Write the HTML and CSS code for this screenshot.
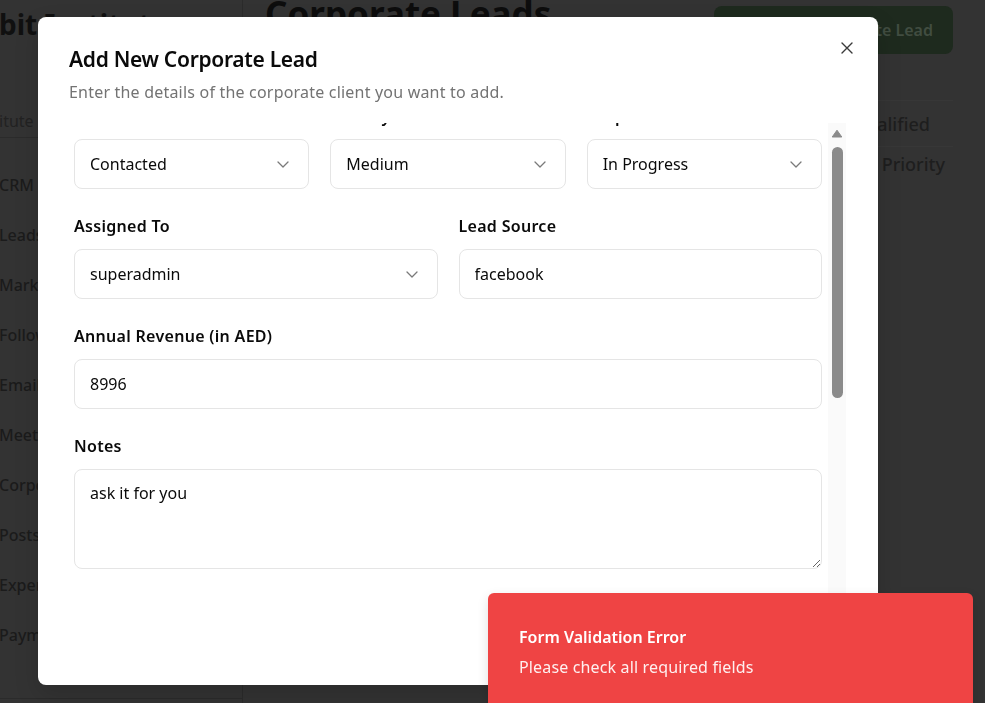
FILE: index.html
```html
<!DOCTYPE html>
<html lang="en">
<head>
<meta charset="utf-8">
<title>Corporate Leads</title>
<link rel="stylesheet" href="styles.css">
</head>
<body>
<div class="app">
  <aside class="sidebar">
    <div class="brand">
      <div class="brand-name">bit Institute</div>
      <div class="brand-sub">itute</div>
    </div>
    <nav class="nav">
      <a class="nav-item">CRM</a>
      <a class="nav-item">Leads</a>
      <a class="nav-item">Marketing</a>
      <a class="nav-item">Follow-ups</a>
      <a class="nav-item">Emails</a>
      <a class="nav-item">Meetings</a>
      <a class="nav-item">Corporate</a>
      <a class="nav-item">Posts</a>
      <a class="nav-item">Expenses</a>
      <a class="nav-item">Payments</a>
    </nav>
    <div class="sidebar-foot"></div>
  </aside>
  <main class="main">
    <header class="page-head">
      <h1 class="page-title">Corporate Leads</h1>
      <button class="primary-btn" type="button">
        <svg width="16" height="16" viewBox="0 0 24 24" fill="none" stroke="currentColor" stroke-width="2" stroke-linecap="round"><path d="M12 5v14M5 12h14"/></svg>
        <span>Add Corporate Lead</span>
      </button>
    </header>
    <section class="summary">
      <div class="summary-row summary-row-a">Qualified</div>
      <div class="summary-row summary-row-b">High Priority</div>
    </section>
  </main>
</div>

<div class="modal" role="dialog" aria-labelledby="dlg-title">
  <button class="close-btn" type="button" aria-label="Close">
    <svg width="12" height="12" viewBox="0 0 12 12" fill="none" stroke="currentColor" stroke-width="1.4" stroke-linecap="round"><path d="M1 1L11 11M11 1L1 11"/></svg>
  </button>
  <div class="modal-head">
    <h2 id="dlg-title" class="modal-title">Add New Corporate Lead</h2>
    <p class="modal-desc">Enter the details of the corporate client you want to add.</p>
  </div>
  <div class="modal-body">
    <div class="scroll-area">
      <form class="form">
        <div class="grid-3">
          <div class="field">
            <label class="label">Status</label>
            <button class="select" type="button"><span>Contacted</span><svg class="chev" width="12" height="7" viewBox="0 0 12 7" fill="none" stroke="currentColor" stroke-width="1.3" stroke-linecap="round" stroke-linejoin="round"><path d="M1 1L6 6L11 1"/></svg></button>
          </div>
          <div class="field">
            <label class="label">Priority</label>
            <button class="select" type="button"><span>Medium</span><svg class="chev" width="12" height="7" viewBox="0 0 12 7" fill="none" stroke="currentColor" stroke-width="1.3" stroke-linecap="round" stroke-linejoin="round"><path d="M1 1L6 6L11 1"/></svg></button>
          </div>
          <div class="field">
            <label class="label">Response Status</label>
            <button class="select" type="button"><span>In Progress</span><svg class="chev" width="12" height="7" viewBox="0 0 12 7" fill="none" stroke="currentColor" stroke-width="1.3" stroke-linecap="round" stroke-linejoin="round"><path d="M1 1L6 6L11 1"/></svg></button>
          </div>
        </div>
        <div class="grid-2">
          <div class="field">
            <label class="label">Assigned To</label>
            <button class="select" type="button"><span>superadmin</span><svg class="chev" width="12" height="7" viewBox="0 0 12 7" fill="none" stroke="currentColor" stroke-width="1.3" stroke-linecap="round" stroke-linejoin="round"><path d="M1 1L6 6L11 1"/></svg></button>
          </div>
          <div class="field">
            <label class="label">Lead Source</label>
            <input class="input" type="text" value="facebook">
          </div>
        </div>
        <div class="field">
          <label class="label">Annual Revenue (in AED)</label>
          <input class="input" type="text" value="8996">
        </div>
        <div class="field">
          <label class="label">Notes</label>
          <textarea class="textarea">ask it for you</textarea>
        </div>
      </form>
    </div>
    <div class="scrollbar" aria-hidden="true">
      <span class="sb-button">
        <svg width="12" height="9" viewBox="0 0 12 9"><path d="M6 1.2L10.8 8H1.2Z" fill="#8b8b8b" stroke="#8b8b8b" stroke-width="1" stroke-linejoin="round"/></svg>
      </span>
      <span class="sb-thumb"></span>
    </div>
  </div>
  <div class="modal-foot"></div>
</div>

<div class="toast" role="status">
  <div class="toast-title">Form Validation Error</div>
  <div class="toast-desc">Please check all required fields</div>
</div>
</body>
</html>
```

FILE: styles.css
```css
* {
  box-sizing: border-box;
}

html, body {
  margin: 0;
  padding: 0;
}

body {
  width: 985px;
  height: 703px;
  overflow: hidden;
  background: #333333;
  font-family: "Noto Sans", "Open Sans", sans-serif;
  color: #0a0a0a;
}

button, input, textarea {
  font-family: inherit;
}

/* ---------- background page (dimmed) ---------- */
.app {
  display: flex;
  height: 703px;
}

.sidebar {
  width: 243px;
  flex: none;
  display: flex;
  flex-direction: column;
  border-right: 1px solid #2b2b2b;
}

.brand {
  height: 138px;
  border-bottom: 1px solid #2b2b2b;
  padding-top: 4px;
}

.brand-name {
  font-size: 28px;
  font-weight: 700;
  line-height: 40px;
  color: #101010;
  white-space: nowrap;
  margin-left: -1px;
}

.brand-sub {
  margin-top: 65px;
  font-size: 16px;
  line-height: 24px;
  color: #222222;
  white-space: nowrap;
  margin-left: -1px;
}

.nav {
  display: flex;
  flex-direction: column;
  padding-top: 22px;
  flex: 1;
}

.nav-item {
  height: 50px;
  display: flex;
  align-items: center;
  font-size: 16px;
  font-weight: 500;
  color: #1b1b1b;
  white-space: nowrap;
  margin-left: -1px;
}

.sidebar-foot {
  height: 5px;
  border-top: 1px solid #2b2b2b;
}

.main {
  flex: 1;
  padding: 0 32px 0 22px;
}

.page-head {
  display: flex;
  justify-content: space-between;
  align-items: flex-start;
}

.page-title {
  margin: -6px 0 0;
  font-size: 35px;
  line-height: 40px;
  font-weight: 700;
  color: #0d0d0d;
  white-space: nowrap;
}

.primary-btn {
  margin-top: 6px;
  width: 239px;
  height: 48px;
  border: 0;
  border-radius: 8px;
  background: #1e2a1e;
  color: #414d41;
  display: flex;
  align-items: center;
  justify-content: flex-end;
  gap: 8px;
  font-size: 16px;
  font-weight: 600;
  padding: 0 20px;
}

.summary {
  margin: 46px 0 0 auto;
  width: 300px;
  border-top: 1px solid #373737;
}

.summary-row {
  height: 45px;
  display: flex;
  align-items: center;
  justify-content: flex-end;
  font-size: 18px;
  font-weight: 500;
  color: #1e1e1e;
}

.summary-row-a {
  padding-right: 23px;
  border-bottom: 1px solid #373737;
  margin-top: 1px;
}

.summary-row-b {
  padding-right: 8px;
  margin-top: -6px;
}

/* ---------- dialog ---------- */
.modal {
  position: fixed;
  left: 38px;
  top: 17px;
  width: 840px;
  height: 668px;
  background: #ffffff;
  border-radius: 8px;
  padding: 28px 32px 24px;
  display: flex;
  flex-direction: column;
  box-shadow: 0 10px 25px rgba(0, 0, 0, 0.15);
}

.close-btn {
  position: absolute;
  top: 23px;
  left: 801px;
  width: 16px;
  height: 16px;
  padding: 0;
  border: 0;
  background: transparent;
  color: #3a3a3a;
  display: flex;
  align-items: center;
  justify-content: center;
}

.modal-head {
  flex: none;
}

.modal-title {
  margin: 0;
  font-size: 21px;
  line-height: 28px;
  font-weight: 600;
  color: #0a0a0a;
  letter-spacing: -0.3px;
  margin-left: -1px;
}

.modal-desc {
  margin: 7px 0 0;
  font-size: 16px;
  line-height: 24px;
  color: #737373;
  letter-spacing: 0.2px;
  margin-left: -1px;
}

.modal-body {
  flex: 1;
  min-height: 0;
  margin-top: 19px;
  display: flex;
}

.scroll-area {
  flex: 1;
  min-width: 0;
  overflow: hidden;
  padding: 0 6px 0 4px;
}

.form {
  margin-top: -19px;
  display: flex;
  flex-direction: column;
  gap: 25px;
}

.grid-3 {
  display: grid;
  grid-template-columns: repeat(3, 1fr);
  gap: 21px;
}

.grid-2 {
  display: grid;
  grid-template-columns: repeat(2, 1fr);
  gap: 21px;
}

.field {
  display: flex;
  flex-direction: column;
  min-width: 0;
}

.label {
  font-size: 16px;
  line-height: 24px;
  font-weight: 600;
  color: #0a0a0a;
  margin-bottom: 11px;
  white-space: nowrap;
  letter-spacing: 0.3px;
}

.select,
.input {
  height: 50px;
  width: 100%;
  border: 1px solid #e5e5e5;
  border-radius: 8px;
  background: #ffffff;
  font-size: 16px;
  color: #0a0a0a;
  padding: 0 19px 0 15px;
  text-align: left;
}

.select {
  display: flex;
  align-items: center;
  justify-content: space-between;
}

.chev {
  color: #7a7a7a;
  flex: none;
}

.input {
  outline: none;
}

.textarea {
  height: 100px;
  width: 100%;
  border: 1px solid #e5e5e5;
  border-radius: 8px;
  font-size: 16px;
  line-height: 24px;
  color: #0a0a0a;
  padding: 11px 15px;
  outline: none;
  resize: vertical;
  display: block;
}

.scrollbar {
  width: 18px;
  flex: none;
  background: #fafafa;
  display: flex;
  flex-direction: column;
  align-items: center;
}

.sb-button {
  height: 20px;
  width: 18px;
  display: flex;
  align-items: center;
  justify-content: center;
}

.sb-thumb {
  margin-top: 4px;
  width: 11px;
  height: 251px;
  border-radius: 6px;
  background: #8b8b8b;
}

.modal-foot {
  flex: none;
  height: 40px;
  margin-top: 16px;
}

/* ---------- toast ---------- */
.toast {
  position: fixed;
  left: 488px;
  top: 593px;
  width: 485px;
  height: 140px;
  border-radius: 6px;
  background: #ef4444;
  color: #ffffff;
  padding: 32px 31px;
  box-shadow: 0 4px 12px rgba(0, 0, 0, 0.12);
}

.toast-title {
  font-size: 16px;
  line-height: 24px;
  font-weight: 600;
}

.toast-desc {
  margin-top: 6px;
  font-size: 16px;
  line-height: 24px;
  color: rgba(255, 255, 255, 0.92);
  letter-spacing: 0.15px;
}
```
